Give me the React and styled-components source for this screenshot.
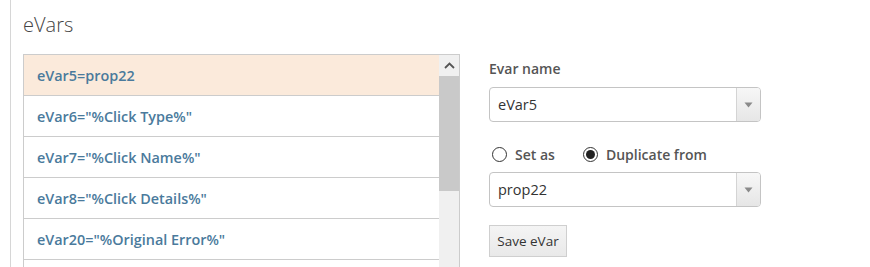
import styled, { createGlobalStyle } from 'styled-components';

const GlobalStyle = createGlobalStyle`
    html, body {
        margin: 0;
        padding: 0;
        background: #ffffff;
        font-family: "Open Sans", "Noto Sans", sans-serif;
        overflow: hidden;
    }
`;

export const Page = styled.div`
    margin-left: 10px;
    border-left: 1px solid #d6d6d6;
    padding-left: 12px;
    height: 267px;
    box-sizing: border-box;
`;

export const Title = styled.h2`
    margin: 0;
    padding-top: 11px;
    height: 54px;
    box-sizing: border-box;
    font-size: 20px;
    font-weight: 300;
    color: #444444;
`;

export const Body = styled.div`
    display: flex;
    gap: 29px;
`;

export const ListBox = styled.div`
    display: flex;
    width: 437px;
    box-sizing: border-box;
    border: 1px solid #cccccc;
    border-bottom: none;
    height: 213px;
    overflow: hidden;
`;

export const Rows = styled.ul`
    list-style: none;
    margin: 0;
    padding: 0;
    flex: 1;
`;

export const Row = styled.li`
    height: 40px;
    display: flex;
    align-items: center;
    padding-left: 13px;
    border-bottom: 1px solid #cccccc;
    background: ${p => (p.$active ? '#fbeadb' : '#ffffff')};
    color: #4a7a9c;
    font-size: 14.4px;
    font-weight: 600;
    white-space: nowrap;
`;

export const Scrollbar = styled.div`
    width: 20px;
    background: #f0f0f0;
    display: flex;
    flex-direction: column;
`;

export const ArrowUp = styled.div`
    height: 21px;
    display: flex;
    align-items: center;
    justify-content: center;
`;

export const Thumb = styled.div`
    height: 115px;
    background: #c9c9c9;
`;

export const Form = styled.div`
    display: flex;
    flex-direction: column;
    width: 272px;
    padding-top: 5px;
`;

export const Label = styled.div`
    font-size: 14px;
    font-weight: 600;
    color: #555555;
    height: 22px;
    margin-bottom: 6px;
`;

export const Select = styled.div`
    height: 35px;
    box-sizing: border-box;
    border: 1px solid #c4c4c4;
    border-radius: 4px;
    display: flex;
    align-items: stretch;
    overflow: hidden;
    background: #ffffff;
`;

export const SelectValue = styled.div`
    flex: 1;
    display: flex;
    align-items: center;
    padding-left: 8px;
    font-size: 14.5px;
    color: #333333;
`;

export const SelectArrow = styled.div`
    width: 23px;
    border-left: 1px solid #d4d4d4;
    background: linear-gradient(#f7f7f7, #e6e6e6);
    display: flex;
    align-items: center;
    justify-content: center;
`;

export const Radios = styled.div`
    display: flex;
    align-items: center;
    gap: 28px;
    height: 30px;
    margin-top: 17px;
    margin-bottom: 3px;
    padding-left: 3px;
`;

export const RadioLabel = styled.label`
    display: flex;
    align-items: center;
    gap: 8px;
    font-size: 14px;
    font-weight: 600;
    color: #555555;
`;

export const RadioDot = styled.span`
    width: 15px;
    height: 15px;
    box-sizing: border-box;
    border: 1px solid #333333;
    border-radius: 50%;
    display: flex;
    align-items: center;
    justify-content: center;
    background: #ffffff;

    &::after {
        content: '';
        width: 9px;
        height: 9px;
        border-radius: 50%;
        background: ${p => (p.$checked ? '#222222' : 'transparent')};
    }
`;

export const Button = styled.button`
    margin-top: 18px;
    align-self: flex-start;
    width: 78px;
    height: 32px;
    border: 1px solid #cfcfcf;
    background: linear-gradient(#f4f4f4, #e9e9e9);
    font-family: "Open Sans", "Noto Sans", sans-serif;
    font-size: 13.5px;
    color: #333333;
    padding: 0;
`;

const Caret = () => (
    <svg width="9" height="6" viewBox="0 0 9 6">
        <path d="M0.5 0.5 L8.5 0.5 L4.5 5.5 Z" fill="#8a8a8a" />
    </svg>
)

const Chevron = () => (
    <svg width="11" height="7" viewBox="0 0 11 7">
        <path d="M1 6 L5.5 1.5 L10 6" fill="none" stroke="#555555" strokeWidth="1.8" />
    </svg>
)

const rows = [
    'eVar5=prop22',
    'eVar6="%Click Type%"',
    'eVar7="%Click Name%"',
    'eVar8="%Click Details%"',
    'eVar20="%Original Error%"',
];

const App = () => {
    return (
        <>
            <GlobalStyle />
            <Page>
                <Title>eVars</Title>
                <Body>
                    <ListBox>
                        <Rows>
                            {rows.map((r, i) => (
                                <Row key={r} $active={i === 0}>{r}</Row>
                            ))}
                        </Rows>
                        <Scrollbar>
                            <ArrowUp><Chevron /></ArrowUp>
                            <Thumb />
                        </Scrollbar>
                    </ListBox>
                    <Form>
                        <Label>Evar name</Label>
                        <Select>
                            <SelectValue>eVar5</SelectValue>
                            <SelectArrow><Caret /></SelectArrow>
                        </Select>
                        <Radios>
                            <RadioLabel><RadioDot />Set as</RadioLabel>
                            <RadioLabel><RadioDot $checked />Duplicate from</RadioLabel>
                        </Radios>
                        <Select>
                            <SelectValue>prop22</SelectValue>
                            <SelectArrow><Caret /></SelectArrow>
                        </Select>
                        <Button>Save eVar</Button>
                    </Form>
                </Body>
            </Page>
        </>
    )
}

export default App
